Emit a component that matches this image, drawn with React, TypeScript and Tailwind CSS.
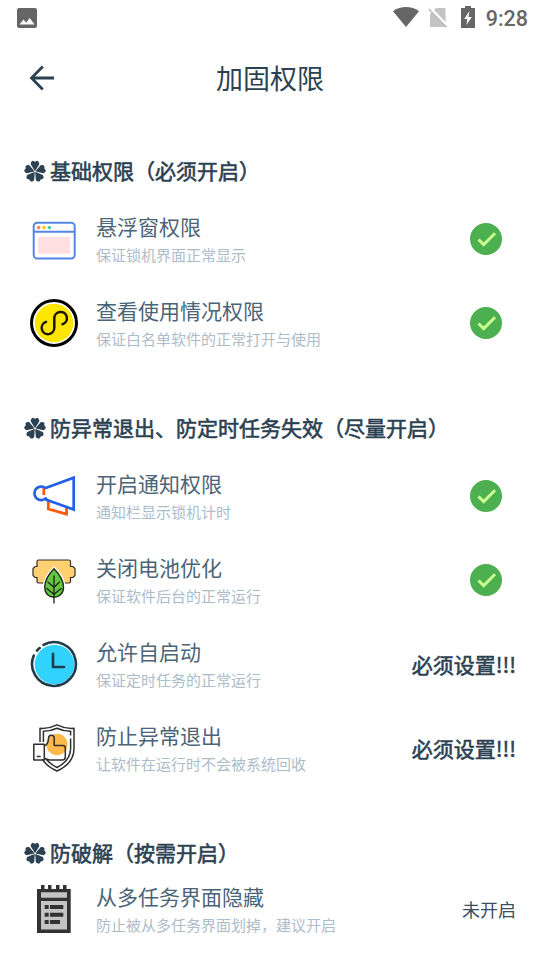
import type { ReactNode } from "react";

type Status = "on" | "required" | "off";

type Permission = {
  icon: ReactNode;
  title: string;
  desc: string;
  status: Status;
};

function WindowIcon() {
  return (
    <svg viewBox="0 0 48 48" className="size-12" fill="none">
      <rect x="3.700" y="7.800" width="41" height="35.700" rx="3.500" fill="#fff" stroke="#5585e5" strokeWidth="2" />
      <path d="M4 16.800h40.500" stroke="#5585e5" strokeWidth="2" />
      <circle cx="8.700" cy="12.600" r="1.800" fill="#ff7f6b" />
      <circle cx="14" cy="12.600" r="1.800" fill="#ffc800" />
      <circle cx="19.400" cy="12.600" r="1.800" fill="#48cfa0" />
      <rect x="8" y="22" width="32" height="16.700" rx="1.500" fill="#ffdfdf" />
    </svg>
  );
}

function MiniAppIcon() {
  return (
    <svg viewBox="0 0 48 48" className="size-12" fill="none">
      <circle cx="24" cy="24" r="22.500" fill="#fff" stroke="#000" strokeWidth="3" />
      <circle cx="24" cy="24" r="19.300" fill="#ffe600" />
      <path
        d="M16 22.900A6.300 6.300 0 1 0 24.300 28.800V19.200A6.300 6.300 0 1 1 32.500 25.200"
        stroke="#1a1600"
        strokeWidth="2.500"
        strokeLinecap="round"
      />
    </svg>
  );
}

function HornIcon() {
  return (
    <svg viewBox="0 0 48 48" className="size-12" fill="none">
      <path d="M18.300 29v8l18.200 5.200V35.500" stroke="#ff5a0a" strokeWidth="2.800" />
      <path d="M13.800 15.500v7.500" stroke="#ff5a0a" strokeWidth="2.800" />
      <path
        d="M15 16.300 43.700 5.800v31.700L15 27.300M15.700 16.200A6.800 6.800 0 1 0 16.600 25.500"
        stroke="#2360e6"
        strokeWidth="2.700"
      />
    </svg>
  );
}

function BatteryIcon() {
  return (
    <svg viewBox="0 0 48 48" className="size-12" fill="none">
      <path
        d="M8.500 4h30.500a1.500 1.500 0 0 1 1.500 1.500v5h2.500l2 2v7l-2 2h-2.500V25.500a1.500 1.500 0 0 1-1.500 1.500H8.500A1.500 1.500 0 0 1 7 25.500v-4H5l-2-2v-7l2-2h2v-5A1.500 1.500 0 0 1 8.500 4Z"
        fill="#ffd072"
        stroke="#332d22"
        strokeWidth="1.200"
      />
      <path
        d="M24 12.800c-4.500 4.500-9.300 11.500-9.300 18.500 0 6 4 10 9.300 10s9.500-4 9.500-10c0-7-5-14-9.500-18.500Z"
        fill="#fff"
        stroke="#fff"
        strokeWidth="4"
      />
      <path
        d="M24 12.800c-4.500 4.500-9.300 11.500-9.300 18.500 0 6 4 10 9.300 10s9.500-4 9.500-10c0-7-5-14-9.500-18.500Z"
        fill="#65c63d"
        stroke="#1a281a"
        strokeWidth="1.400"
      />
      <path d="M24 19.500v28M17.500 25.800l6.500 5.500 5.800-5.500M16.500 32.300l7.500 6 7.500-6" stroke="#1a281a" strokeWidth="1.300" />
    </svg>
  );
}

function ClockIcon() {
  return (
    <svg viewBox="0 0 48 48" className="size-12" fill="none">
      <circle cx="24.500" cy="24.500" r="19.800" fill="#32d2ff" />
      <path
        d="M13.500 4.800A21.900 21.900 0 1 1 3.800 15.500M7 10.600a22 22 0 0 1 2.700-2.500"
        stroke="#203c4b"
        strokeWidth="2.600"
        strokeLinecap="round"
      />
      <path d="M23 13.700V27h11" stroke="#203c4b" strokeWidth="2.600" strokeLinecap="round" strokeLinejoin="round" />
    </svg>
  );
}

function ShieldIcon() {
  return (
    <svg viewBox="0 0 48 48" className="size-12" fill="none" stroke="#303030" strokeWidth="1.500" strokeLinejoin="round">
      <circle cx="27" cy="20.500" r="10.700" fill="#ffb94b" stroke="none" />
      <path d="M10 18V4.300C16 4.800 21.500 3.500 27 .8c5.500 2.700 11 4 17 3.500v20c0 10.500-6.500 18-17 22.700-6.800-3-11.800-7-14.600-11.800" />
      <path d="M13.400 18V7.300C18.500 7.300 23 6.200 27 4.300c4 1.900 8.500 3 13.600 3v4.200M40.600 14.500v10c0 9-5 14.500-13.600 19-5-2.500-8.500-5.200-10.800-8.500" />
      <path d="M3.800 20.300h10.500v15.700H3.800zM6.700 32.500h4" />
      <path d="M14.300 21.800c3.300-1 4.200-3.500 4.200-7.500 0-4 5.700-4 5.700 0v7.200h8.600a2.500 2.500 0 0 1 2.500 2.500v9a3 3 0 0 1-3 3H20c-2 0-3.500-.8-5.700-1.800" />
    </svg>
  );
}

function NotepadIcon() {
  return (
    <svg viewBox="0 0 48 48" className="size-12" fill="#323232">
      <path d="M7 4h33.700v44H7z" />
      <path d="M11 0h3.500v5H11zM18 0h3.500v5H18zM26 0h3.500v5H26zM33 0h3.500v5H33z" />
      <path d="M11 7.300h26v5.400H11zM11 16h26v28.500H11z" fill="#c4c4c4" />
      <path d="M14.700 20h4v4h-4zM20 20h13.300v4H20zM14.700 27.700h4v4h-4zM20 27.700h13.300v4H20zM14.700 35h4v4h-4zM20 35h10v4H20z" />
    </svg>
  );
}

function Flower() {
  return (
    <svg viewBox="0 0 22 22" className="mr-1 mb-0.5 size-[22px]" fill="#2c4152">
      {[0, 72, 144, 216, 288].map((deg) => (
        <path
          key={deg}
          transform={`rotate(${deg} 11 11.500)`}
          d="M10.700 10.700 6.700 4.200C6.700 2.700 7.400 1.500 8.800.8L11 1.700l2.200-.9c1.400.7 2.100 1.900 2.100 3.400l-4 6.500Z"
        />
      ))}
    </svg>
  );
}

const groups: { name: string; tight?: boolean; items: Permission[] }[] = [
  {
    name: "基础权限（必须开启）",
    items: [
      { icon: <WindowIcon />, title: "悬浮窗权限", desc: "保证锁机界面正常显示", status: "on" },
      { icon: <MiniAppIcon />, title: "查看使用情况权限", desc: "保证白名单软件的正常打开与使用", status: "on" },
    ],
  },
  {
    name: "防异常退出、防定时任务失效（尽量开启）",
    items: [
      { icon: <HornIcon />, title: "开启通知权限", desc: "通知栏显示锁机计时", status: "on" },
      { icon: <BatteryIcon />, title: "关闭电池优化", desc: "保证软件后台的正常运行", status: "on" },
      { icon: <ClockIcon />, title: "允许自启动", desc: "保证定时任务的正常运行", status: "required" },
      { icon: <ShieldIcon />, title: "防止异常退出", desc: "让软件在运行时不会被系统回收", status: "required" },
    ],
  },
  {
    name: "防破解（按需开启）",
    tight: true,
    items: [
      { icon: <NotepadIcon />, title: "从多任务界面隐藏", desc: "防止被从多任务界面划掉，建议开启", status: "off" },
    ],
  },
];

function StatusMark({ status }: { status: Status }) {
  if (status === "on") {
    return (
      <svg viewBox="0 0 32 32" className="mr-3.5 mb-0.5 size-8" fill="none">
        <circle cx="16" cy="16" r="16" fill="#4caf50" />
        <path d="m8.500 16.500 5.200 5.100L25 10.300" stroke="#ccff90" strokeWidth="3" />
      </svg>
    );
  }
  if (status === "required") {
    return (
      <span className="mb-px text-[21px] leading-none [-webkit-text-stroke:0.6px_#2c4152]">必须设置!!!</span>
    );
  }
  return <span className="mb-[3px] text-[18px] leading-none text-[#3a5061]">未开启</span>;
}

function PermissionRow({ icon, title, desc, status }: Permission) {
  return (
    <div className="flex h-15 items-center">
      <div className="mb-0.5 ml-1.5">{icon}</div>
      <div className="mb-0.5 ml-[18px] flex flex-1 flex-col gap-0.5">
        <span className="text-[21px] leading-[30px] text-[#4b6478]">{title}</span>
        <span className="text-[15px] leading-6 text-[#adbcc9]">{desc}</span>
      </div>
      <StatusMark status={status} />
    </div>
  );
}

function StatusBar() {
  return (
    <div className="flex h-9 items-center pr-3 pl-[17px] text-[#666]">
      <svg viewBox="0 0 20 20" className="size-5" fill="currentColor">
        <path
          fillRule="evenodd"
          d="M2 0h16a2 2 0 0 1 2 2v16a2 2 0 0 1-2 2H2a2 2 0 0 1-2-2V2a2 2 0 0 1 2-2Zm.500 16.500h15L12.700 10l-3.600 4.700L6.500 11.500Z"
        />
      </svg>
      <svg viewBox="0 0 26 20" className="mb-0.5 ml-auto h-5 w-[26px]" fill="currentColor">
        <path d="M0 4.200C7.500-1.400 18.500-1.400 26 4.200L13 20Z" />
      </svg>
      <svg viewBox="0 0 20 21" className="mb-px ml-[9px] h-[21px] w-5">
        <path d="M8 1h9.500v19H2V7Z" fill="#c4c4c4" />
        <path d="M2 1.500 20 20" stroke="#fff" strokeWidth="3.500" />
        <path d="M.800 2 18.500 20.300" stroke="#b8b8b8" strokeWidth="1.500" />
      </svg>
      <svg viewBox="0 0 14 22" className="mb-0.5 ml-[13px] h-[22px] w-3.5" fill="currentColor">
        <path d="M4 0h6v2h4v20H0V2h4Z" />
        <path d="M8.500 5 3.200 13h3l-.700 6 5.300-8H7.500Z" fill="#fff" />
      </svg>
      <span className="mt-0.5 ml-[11px] font-[Roboto,sans-serif] text-[21.500px] leading-none font-medium">9:28</span>
    </div>
  );
}

export default function App() {
  return (
    <div className="h-[960px] w-[540px] overflow-hidden bg-white font-['Noto_Sans_CJK_SC',sans-serif] text-[#2c4152]">
      <StatusBar />
      <header className="relative flex h-[84px] items-center justify-center">
        <svg viewBox="0 0 26 26" className="absolute left-[29px] size-[26px]" fill="none" stroke="currentColor" strokeWidth="2.800">
          <path d="M25 13H3M13.800 1.500 2.500 13l11.300 11.500" />
        </svg>
        <h1 className="mb-0.5 text-[27px] leading-none">加固权限</h1>
      </header>
      <main className="flex flex-col gap-[37px] px-6 pt-[26px]">
        {groups.map((group) => (
          <section key={group.name} className="pb-3">
            <h2 className="flex h-[52px] items-center text-[21px] leading-none">
              <Flower />
              <span className="mb-1 [-webkit-text-stroke:0.6px_#2c4152]">{group.name}</span>
            </h2>
            <div className={group.tight ? "flex flex-col gap-6" : "flex flex-col gap-6 pt-3"}>
              {group.items.map((item) => (
                <PermissionRow key={item.title} {...item} />
              ))}
            </div>
          </section>
        ))}
      </main>
    </div>
  );
}
